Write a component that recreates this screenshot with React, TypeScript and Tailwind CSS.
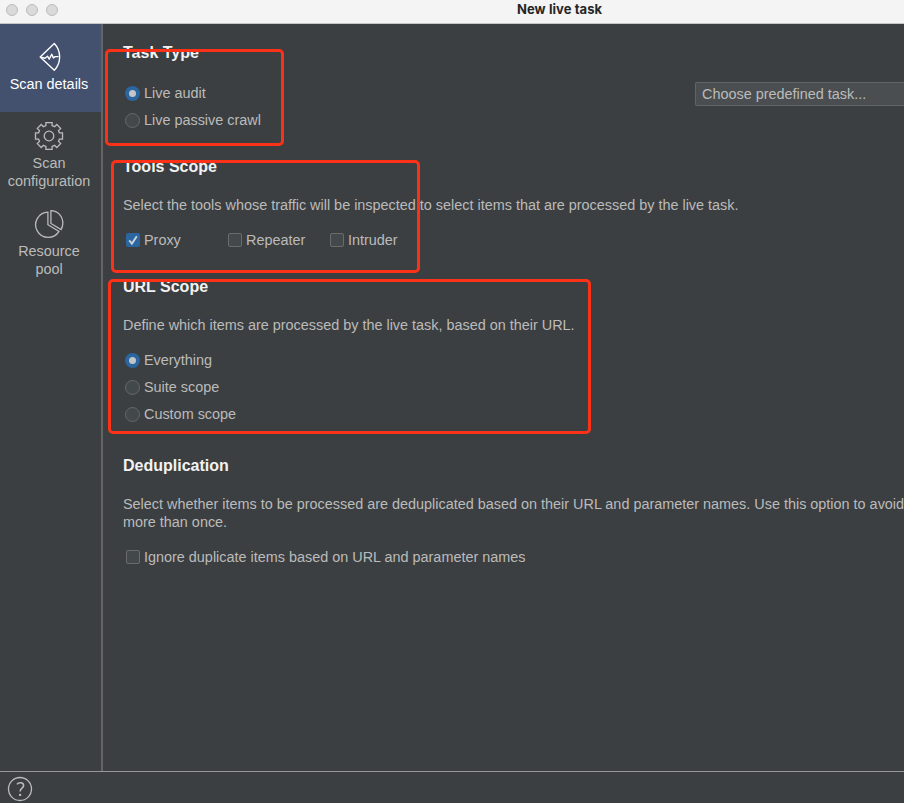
import type { ReactNode } from 'react';

function Radio({ label, checked = false }: { label: string; checked?: boolean }) {
  return (
    <label className="flex h-[18px] items-center gap-1 pl-0.5">
      <span
        className={
          checked
            ? 'flex size-[15px] items-center justify-center rounded-full bg-[#2a66a0]'
            : 'size-[15px] rounded-full border border-[#65686a] bg-[#43494a]'
        }
      >
        {checked && <span className="size-[7px] rounded-full bg-[#c3c6c9]" />}
      </span>
      <span>{label}</span>
    </label>
  );
}

function Checkbox({ label, checked = false }: { label: string; checked?: boolean }) {
  return (
    <label className="flex h-[18px] items-center gap-1 pl-[3px]">
      <span
        className={
          checked
            ? 'size-3.5 rounded-[2px] bg-[#2a66a0]'
            : 'size-3.5 rounded-[2px] border border-[#6b6b6b] bg-[#43494a]'
        }
      >
        {checked && (
          <svg viewBox="0 0 14 14" className="size-3.5" fill="none" stroke="#d0d3d6" strokeWidth="1.9">
            <path d="M3.2 7.4 5.9 10.6 10.8 3.2" />
          </svg>
        )}
      </span>
      <span>{label}</span>
    </label>
  );
}

function Heading({ children }: { children: ReactNode }) {
  return <h2 className="h-[18px] text-[16px] leading-[18px] font-bold text-[#f2f2f2]">{children}</h2>;
}

function ScanIcon() {
  return (
    <svg width="32" height="32" viewBox="0 0 32 32" fill="none" stroke="#fff" strokeWidth="1.4" strokeLinejoin="round">
      <path d="M21.3 2.6 7.2 16.1 21.3 29.2C28.4 21.8 28.4 10 21.3 2.6Z" />
      <path d="M7.8 16.1 12 17.2 14.5 15.2 16.2 18.2 18.7 13.2 20.4 16.9 22.2 15.6H25.5" />
    </svg>
  );
}

function GearIcon() {
  return (
    <svg width="32" height="32" viewBox="0 0 32 32" fill="none" stroke="#bbb" strokeWidth="1.3">
      <path d="M12.9 2.6H19.1V5.6L21.6 6.7 23.8 4.5 27.7 8.4 25.5 10.6 26.4 12.9H29.5V19.1H26.4L25.5 21.4 27.7 23.6 23.8 27.5 21.6 25.3 19.1 26.4V29.4H12.9V26.4L10.4 25.3 8.2 27.5 4.3 23.6 6.5 21.4 5.6 19.1H2.5V12.9H5.6L6.5 10.6 4.3 8.4 8.2 4.5 10.4 6.7 12.9 5.6Z" />
      <circle cx="16" cy="16" r="4.8" />
    </svg>
  );
}

function PieIcon() {
  return (
    <svg width="32" height="32" viewBox="0 0 32 32" fill="none" stroke="#bbb" strokeWidth="1.3">
      <path d="M14.9 4.2A12.6 12.6 0 1 0 26 23.4L14.9 16.7Z" />
      <path d="M17.9 2.6C25 2.6 29.8 8.5 29.8 15.2 29.8 17.6 29.2 19.8 28.1 21.6L17.9 15.5Z" />
    </svg>
  );
}

function Tab({ icon, active = false, children }: { icon: ReactNode; active?: boolean; children: ReactNode }) {
  return (
    <div
      className={
        active
          ? 'flex h-[88px] flex-col items-center bg-[#43506e] pt-[17px] pr-[3px] leading-[18px] text-white'
          : 'flex h-[88px] flex-col items-center pt-2 pr-[3px] leading-[18px]'
      }
    >
      {icon}
      <div className="mt-0.5 text-center">{children}</div>
    </div>
  );
}

export default function App() {
  return (
    <div className="relative flex h-[803px] w-[904px] flex-col overflow-hidden bg-[#3c3f41] font-['Liberation_Sans',Arial,sans-serif] text-[14.42px] leading-[18px] whitespace-nowrap text-[#bbbbbb]">
      <header className="flex h-6 shrink-0 items-center border-b border-[#c6c6c6] bg-[#f4f4f4] pl-1.5">
        <div className="flex gap-2 pb-[3px]">
          <span className="size-3 rounded-full border border-[#bcbcbc] bg-[#dadada]" />
          <span className="size-3 rounded-full border border-[#bcbcbc] bg-[#dadada]" />
          <span className="size-3 rounded-full border border-[#bcbcbc] bg-[#dadada]" />
        </div>
        <h1 className="ml-[459px] pb-[5px] font-[Inter,sans-serif] text-[13px] font-bold tracking-[0.07px] text-[#262626]">New live task</h1>
      </header>

      <div className="flex h-[747px] shrink-0">
        <nav className="w-[103px] shrink-0 border-r-2 border-[#646464]">
          <Tab icon={<ScanIcon />} active>Scan details</Tab>
          <Tab icon={<GearIcon />}>Scan<br />configuration</Tab>
          <Tab icon={<PieIcon />}>Resource<br />pool</Tab>
        </nav>

        <main className="min-w-0 flex-1 overflow-hidden pt-5 pl-5">
          <section className="flex h-[85px] justify-between">
            <div>
              <Heading>Task Type</Heading>
              <div className="mt-[22px] flex flex-col gap-[9px]">
                <Radio label="Live audit" checked />
                <Radio label="Live passive crawl" />
              </div>
            </div>
            <button className="mt-[38px] flex h-6 w-[209px] items-center rounded-l-[2px] border border-r-0 border-[#626567] bg-[#4a4e50] pl-1.5">
              Choose predefined task...
            </button>
          </section>

          <section className="mt-[29px]">
            <Heading>Tools Scope</Heading>
            <p className="mt-5">Select the tools whose traffic will be inspected to select items that are processed by the live task.</p>
            <div className="mt-[17px] grid grid-cols-[102px_102px_102px]">
              <Checkbox label="Proxy" checked />
              <Checkbox label="Repeater" />
              <Checkbox label="Intruder" />
            </div>
          </section>

          <section className="mt-[29px]">
            <Heading>URL Scope</Heading>
            <p className="mt-5">Define which items are processed by the live task, based on their URL.</p>
            <div className="mt-[17px] flex flex-col gap-[9px]">
              <Radio label="Everything" checked />
              <Radio label="Suite scope" />
              <Radio label="Custom scope" />
            </div>
          </section>

          <section className="mt-[34px]">
            <Heading>Deduplication</Heading>
            <p className="mt-5">
              Select whether items to be processed are deduplicated based on their URL and parameter names. Use this option to avoid
              <br />
              more than once.
            </p>
            <div className="mt-[17px]">
              <Checkbox label="Ignore duplicate items based on URL and parameter names" />
            </div>
          </section>
        </main>
      </div>

      <footer className="flex h-8 shrink-0 items-start border-t border-[#999795] pt-1 pl-[7px]">
        <svg width="26" height="26" viewBox="0 0 26 26" fill="none" stroke="#bbb">
          <circle cx="13" cy="13" r="11.5" strokeWidth="1.3" />
          <path d="M10 8.4C11 6.5 16.6 5.7 16.6 9.4 16.6 12.2 13.1 12.3 13.1 15.6" strokeWidth="1.6" />
          <circle cx="13.1" cy="18.9" r="1.2" fill="#bbb" stroke="none" />
        </svg>
      </footer>

      <div className="pointer-events-none absolute top-[48.5px] left-[104.5px] h-[97.5px] w-[179px] rounded-[5px] border-3 border-[#fb3218]" />
      <div className="pointer-events-none absolute top-40 left-[111px] h-[113px] w-[309px] rounded-[5px] border-3 border-[#fb3218]" />
      <div className="pointer-events-none absolute top-[279px] left-[108px] h-[155px] w-[482.5px] rounded-[5px] border-3 border-[#fb3218]" />
    </div>
  );
}
